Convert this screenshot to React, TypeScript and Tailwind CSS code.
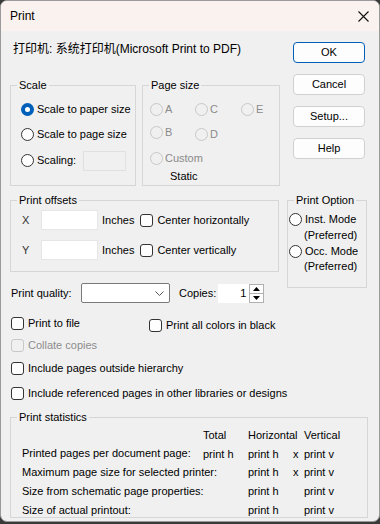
import React from "react";

const F = { fontFamily: '"Liberation Sans", Arial, "Noto Sans CJK SC", sans-serif' };

function Radio({ checked = false, disabled = false }: { checked?: boolean; disabled?: boolean }) {
  if (checked)
    return (
      <span className="inline-flex w-[13px] h-[13px] rounded-full bg-[#005fb8] items-center justify-center shrink-0">
        <span className="w-[5px] h-[5px] rounded-full bg-white" />
      </span>
    );
  return (
    <span
      className={
        "inline-block w-[13px] h-[13px] rounded-full border shrink-0 " +
        (disabled ? "border-[#c8c8c8] bg-[#f0f0f0]" : "border-[#333] bg-white")
      }
    />
  );
}

function Check({ disabled = false }: { disabled?: boolean }) {
  return (
    <span
      className={
        "inline-block w-[13px] h-[13px] rounded-[3px] border shrink-0 " +
        (disabled ? "border-[#c8c8c8] bg-[#f0f0f0]" : "border-[#333] bg-white")
      }
    />
  );
}

function Group({ title, className, children }: { title: string; className: string; children?: React.ReactNode }) {
  return (
    <div className={"relative border border-[#d6d6d6] " + className}>
      <span className="absolute -top-[8px] left-[6px] px-[2px] bg-[#f0f0f0] leading-[14px] text-black">{title}</span>
      {children}
    </div>
  );
}

function Btn({ label, def = false }: { label: string; def?: boolean }) {
  return (
    <div
      className={
        "w-[72px] h-[21px] rounded-[4px] border flex items-center justify-center bg-[#fdfdfd] " +
        (def ? "border-[#005fb8]" : "border-[#d0d0d0]")
      }
    >
      {label}
    </div>
  );
}

export default function App() {
  return (
    <div className="w-[380px] h-[524px] bg-[#3a3a3a] text-[11px] text-black" style={F}>
      <div className="w-[380px] h-[522px] bg-[#f0f0f0] border border-[#9a9a9a] rounded-[7px] overflow-hidden flex flex-col">
        {/* title bar */}
        <div className="h-[30px] bg-[#faf2ee] flex items-center pl-[9px] pr-[10px] shrink-0">
          <span className="text-[12px]">Print</span>
          <svg className="ml-auto" width="11" height="11" viewBox="0 0 11 11">
            <path d="M0.5 0.5 L10.5 10.5 M10.5 0.5 L0.5 10.5" stroke="#111" strokeWidth="1.1" />
          </svg>
        </div>

        {/* row A */}
        <div className="flex">
          <div className="ml-[9px] w-[270px]">
            <div className="mt-[11px] h-[14px] leading-[14px] pl-[3px] text-[12px]">
              打印机: 系统打印机(Microsoft Print to PDF)
            </div>
            <div className="flex gap-[6px] mt-[29px]">
              <Group title="Scale" className="w-[126px] h-[101px]">
                <div className="flex flex-col pl-[10px] pt-[17px] gap-[12px]">
                  <div className="flex items-center gap-[3px] h-[13px]">
                    <Radio checked />
                    <span>Scale to paper size</span>
                  </div>
                  <div className="flex items-center gap-[3px] h-[13px]">
                    <Radio />
                    <span>Scale to page size</span>
                  </div>
                  <div className="flex items-center gap-[3px] h-[13px] mt-[1px]">
                    <Radio />
                    <span>Scaling:</span>
                    <span className="ml-[4px] w-[43px] h-[20px] border border-[#e0e0e0] bg-[#f0f0f0]" />
                  </div>
                </div>
              </Group>
              <Group title="Page size" className="w-[138px] h-[101px] text-[#8a8a8a]">
                <div className="grid grid-cols-[45px_46px_40px] pl-[7px] pt-[17px] gap-y-[10px]">
                  <div className="flex items-center gap-[2px] h-[13px]"><Radio disabled /><span>A</span></div>
                  <div className="flex items-center gap-[2px] h-[13px]"><Radio disabled /><span>C</span></div>
                  <div className="flex items-center gap-[2px] h-[13px]"><Radio disabled /><span>E</span></div>
                  <div className="flex items-center gap-[2px] h-[13px]"><Radio disabled /><span>B</span></div>
                  <div className="flex items-center gap-[2px] h-[13px] mt-[2px]"><Radio disabled /><span>D</span></div>
                  <div />
                  <div className="col-span-3 flex items-center gap-[2px] h-[13px] mt-[1px]"><Radio disabled /><span>Custom</span></div>
                </div>
                <div className="pl-[27px] mt-[4px] text-black leading-[14px]">Static</div>
              </Group>
            </div>
          </div>
          <div className="ml-auto mr-[14px] flex flex-col gap-[11px] pt-[11px]">
            <Btn label="OK" def />
            <Btn label="Cancel" />
            <Btn label="Setup..." />
            <Btn label="Help" />
          </div>
        </div>

        {/* row B */}
        <div className="flex mt-[14px]">
          <div className="ml-[9px] w-[269px]">
            <Group title="Print offsets" className="w-[269px] h-[72px]">
              <div className="flex flex-col pt-[9px] gap-[10px]">
                <div className="flex items-center h-[20px]">
                  <span className="w-[30px] pl-[11px] text-[#333]">X</span>
                  <span className="w-[57px] h-[20px] bg-white border border-[#e6e6e6]" />
                  <span className="ml-[4px]">Inches</span>
                  <span className="ml-[6px] flex"><Check /></span>
                  <span className="ml-[4px]">Center horizontally</span>
                </div>
                <div className="flex items-center h-[20px]">
                  <span className="w-[30px] pl-[11px] text-[#333]">Y</span>
                  <span className="w-[57px] h-[20px] bg-white border border-[#e6e6e6]" />
                  <span className="ml-[4px]">Inches</span>
                  <span className="ml-[6px] flex"><Check /></span>
                  <span className="ml-[4px]">Center vertically</span>
                </div>
              </div>
            </Group>
            <div className="flex items-center mt-[11px] h-[20px]">
              <span className="w-[71px] pl-[1px]">Print quality:</span>
              <span className="w-[89px] h-[20px] bg-white border border-[#7a7a7a] rounded-[2px] flex items-center justify-end pr-[5px]">
                <svg width="9" height="5" viewBox="0 0 9 5"><path d="M0.5 0.5 L4.5 4.5 L8.5 0.5" fill="none" stroke="#555" /></svg>
              </span>
              <span className="ml-[9px]">Copies:</span>
              <span className="ml-[2px] w-[31px] h-[19px] bg-white flex items-center justify-end pr-[3px]">1</span>
              <span className="w-[15px] h-[19px] flex flex-col border border-[#b0b0b0] bg-white">
                <span className="flex-1 flex items-center justify-center border-b border-[#b0b0b0]">
                  <svg width="7" height="4" viewBox="0 0 7 4"><path d="M3.5 0 L7 4 L0 4 Z" fill="#000" /></svg>
                </span>
                <span className="flex-1 flex items-center justify-center">
                  <svg width="7" height="4" viewBox="0 0 7 4"><path d="M0 0 L7 0 L3.5 4 Z" fill="#000" /></svg>
                </span>
              </span>
            </div>
          </div>
          <div className="ml-[8px]">
            <Group title="Print Option" className="w-[80px] h-[88px]">
              <div className="flex flex-col pt-[10px] pl-[1px] leading-[15px]">
                <div className="flex items-center gap-[3px] mt-[1px]"><Radio /><span>Inst. Mode</span></div>
                <div className="pl-[15px] mt-[1px]">(Preferred)</div>
                <div className="flex items-center gap-[3px] mt-[1px]"><Radio /><span>Occ. Mode</span></div>
                <div className="pl-[15px]">(Preferred)</div>
              </div>
            </Group>
          </div>
        </div>

        {/* checkboxes */}
        <div className="flex flex-col pl-[10px] mt-[14px]">
          <div className="flex items-start h-[15px]">
            <Check />
            <span className="ml-[4px] w-[121px] leading-[13px]">Print to file</span>
            <span className="mt-[2px] flex items-center leading-[13px]"><Check /><span className="ml-[4px]">Print all colors in black</span></span>
          </div>
          <div className="flex items-center h-[13px] mt-[7px] text-[#8d8d8d]">
            <Check disabled />
            <span className="ml-[4px]">Collate copies</span>
          </div>
          <div className="flex items-center h-[13px] mt-[10px]">
            <Check />
            <span className="ml-[4px]">Include pages outside hierarchy</span>
          </div>
          <div className="flex items-center h-[13px] mt-[12px]">
            <Check />
            <span className="ml-[4px]">Include referenced pages in other libraries or designs</span>
          </div>
        </div>

        {/* statistics */}
        <div className="pl-[9px] mt-[17px]">
          <Group title="Print statistics" className="w-[358px] h-[101px]">
            <div className="pl-[11px] pt-[8px] leading-[19px] whitespace-nowrap">
              <div className="grid grid-cols-[181px_45px_45px_11px_auto] grid-rows-[18px_19px_19px_19px_19px] items-center">
                <span />
                <span>Total</span>
                <span className="col-span-2">Horizontal</span>
                <span>Vertical</span>
                <span>Printed pages per document page:</span>
                <span className="mt-[1px]">print h</span>
                <span className="mt-[1px]">print h</span>
                <span className="mt-[1px]">x</span>
                <span className="mt-[1px]">print v</span>
                <span>Maximum page size for selected printer:</span>
                <span />
                <span>print h</span>
                <span>x</span>
                <span>print v</span>
                <span>Size from schematic page properties:</span>
                <span />
                <span>print h</span>
                <span />
                <span>print v</span>
                <span>Size of actual printout:</span>
                <span />
                <span>print h</span>
                <span />
                <span>print v</span>
              </div>
            </div>
          </Group>
        </div>
      </div>
    </div>
  );
}
